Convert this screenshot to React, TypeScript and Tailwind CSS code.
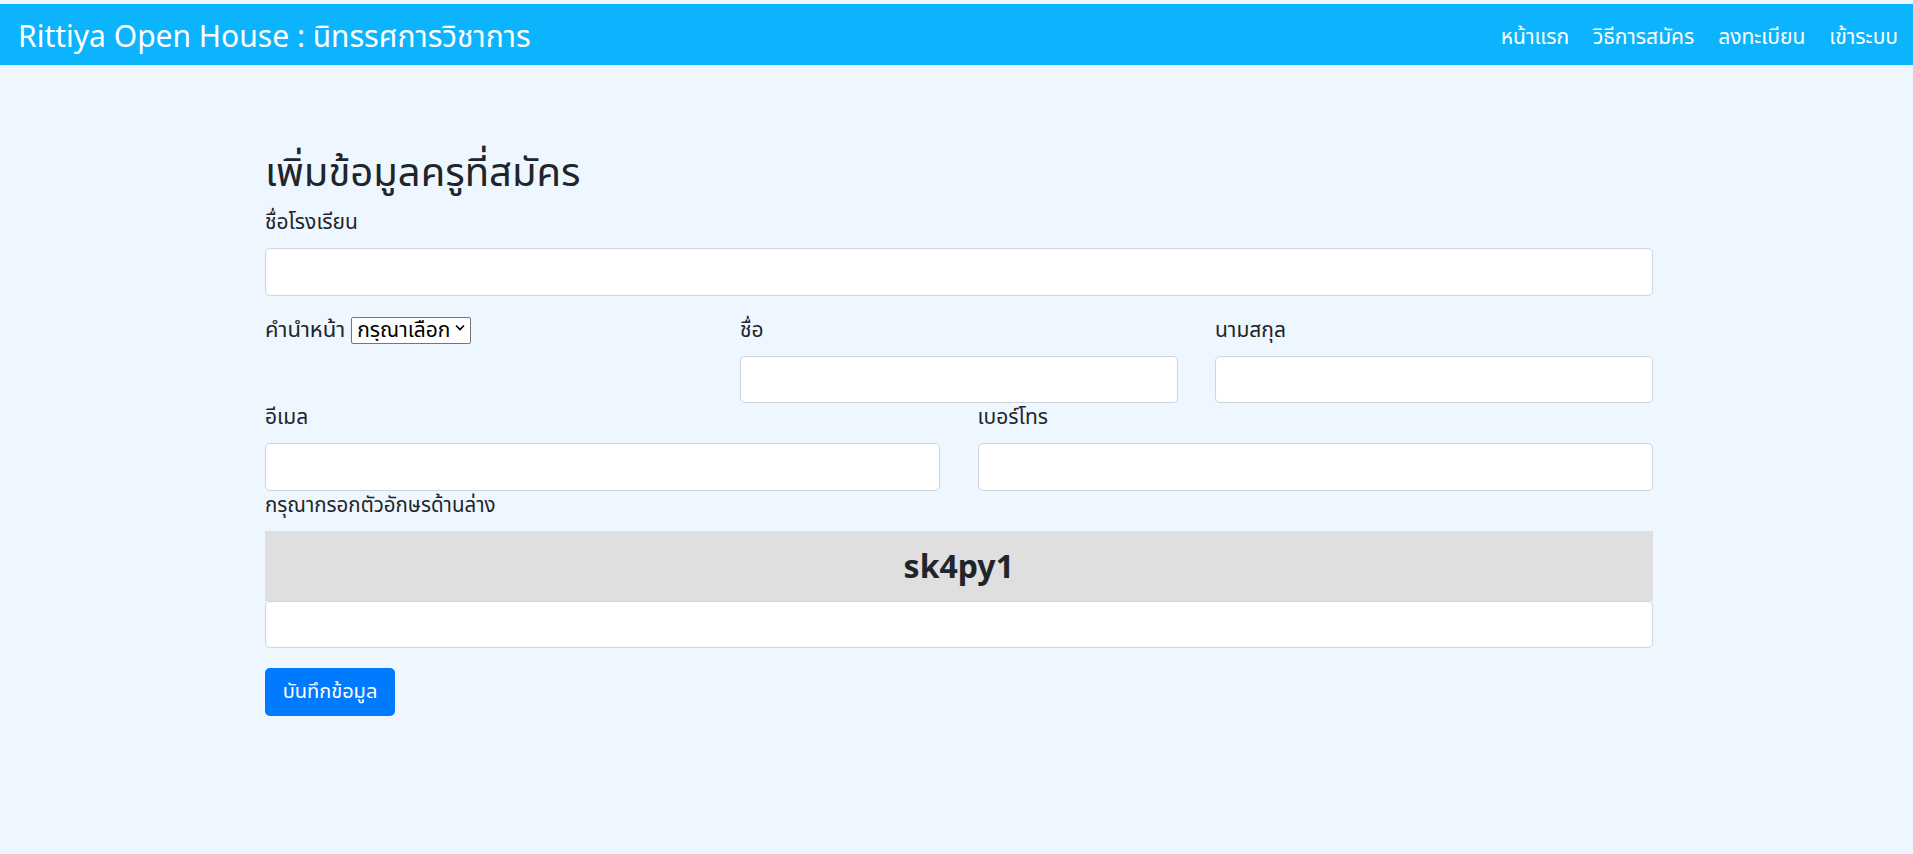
import React from "react";

const font = { fontFamily: '"Noto Sans Thai", "Noto Sans", "Open Sans", sans-serif' };

function Field({ label, className = "" }: { label: string; className?: string }) {
  return (
    <div className={`flex flex-col ${className}`}>
      <label className="text-[21px] leading-[30px] text-[#212529] mb-[10px]">{label}</label>
      <input
        type="text"
        className="h-[47.5px] w-full bg-white border border-[#ced4da] rounded-[5px] px-[15px] text-[20px] outline-none"
      />
    </div>
  );
}

export default function App() {
  return (
    <div className="min-h-screen w-full bg-[#eef7ff] pt-[4px]" style={font}>
      <nav className="h-[61px] bg-[#0bb4fd] flex items-center justify-between pl-[18px] pr-[15px] pt-[7px]">
        <a className="text-white text-[30px] leading-none">Rittiya Open House : นิทรรศการวิชาการ</a>
        <ul className="flex items-center gap-[24px] text-white text-[21px]">
          <li>หน้าแรก</li>
          <li>วิธีการสมัคร</li>
          <li>ลงทะเบียน</li>
          <li>เข้าระบบ</li>
        </ul>
      </nav>

      <main className="ml-[265px] w-[1387.5px] pt-[85px]">
        <h2 className="text-[40px] leading-[48px] text-[#212529] mb-[10px] font-normal">
          เพิ่มข้อมูลครูที่สมัคร
        </h2>

        <Field label="ชื่อโรงเรียน" className="mb-[20px]" />

        <div className="grid grid-cols-3 gap-x-[37.5px]">
          <div className="flex items-start">
            <div className="flex items-center h-[30px] text-[22px] text-[#212529]">
              <span>คำนำหน้า</span>
              <div className="relative ml-[6px]">
                <select className="appearance-none h-[27px] w-[120px] bg-white border border-[#767676] rounded-[2px] pl-[5px] pr-[20px] text-[21px] text-black leading-none">
                  <option>กรุณาเลือก</option>
                  <option>นาย</option>
                  <option>นาง</option>
                  <option>นางสาว</option>
                </select>
                <svg
                  className="absolute right-[6px] top-[10px] pointer-events-none"
                  width="10"
                  height="7"
                  viewBox="0 0 10 7"
                >
                  <path d="M1 1.5 L5 5.5 L9 1.5" stroke="#000" strokeWidth="1.6" fill="none" />
                </svg>
              </div>
            </div>
          </div>
          <Field label="ชื่อ" />
          <Field label="นามสกุล" />
        </div>

        <div className="grid grid-cols-2 gap-x-[37.5px]">
          <Field label="อีเมล" />
          <Field label="เบอร์โทร" />
        </div>

        <div className="flex flex-col">
          <label className="text-[20.5px] leading-[30px] text-[#212529] mb-[10px]">
            กรุณากรอกตัวอักษรด้านล่าง
          </label>
          <div className="h-[70px] bg-[#dfdfdf] flex items-center justify-center">
            <span
              className="text-[32px] font-bold text-[#212529] leading-none"
              style={{ fontFamily: '"Noto Sans", "Open Sans", sans-serif' }}
            >
              sk4py1
            </span>
          </div>
          <input
            type="text"
            className="h-[47.5px] w-full bg-white border border-[#ced4da] rounded-[5px] px-[15px] text-[20px] outline-none"
          />
        </div>

        <button className="mt-[20px] h-[47.5px] w-[130px] bg-[#007bff] text-white text-[20px] rounded-[5px]">
          บันทึกข้อมูล
        </button>
      </main>
    </div>
  );
}
